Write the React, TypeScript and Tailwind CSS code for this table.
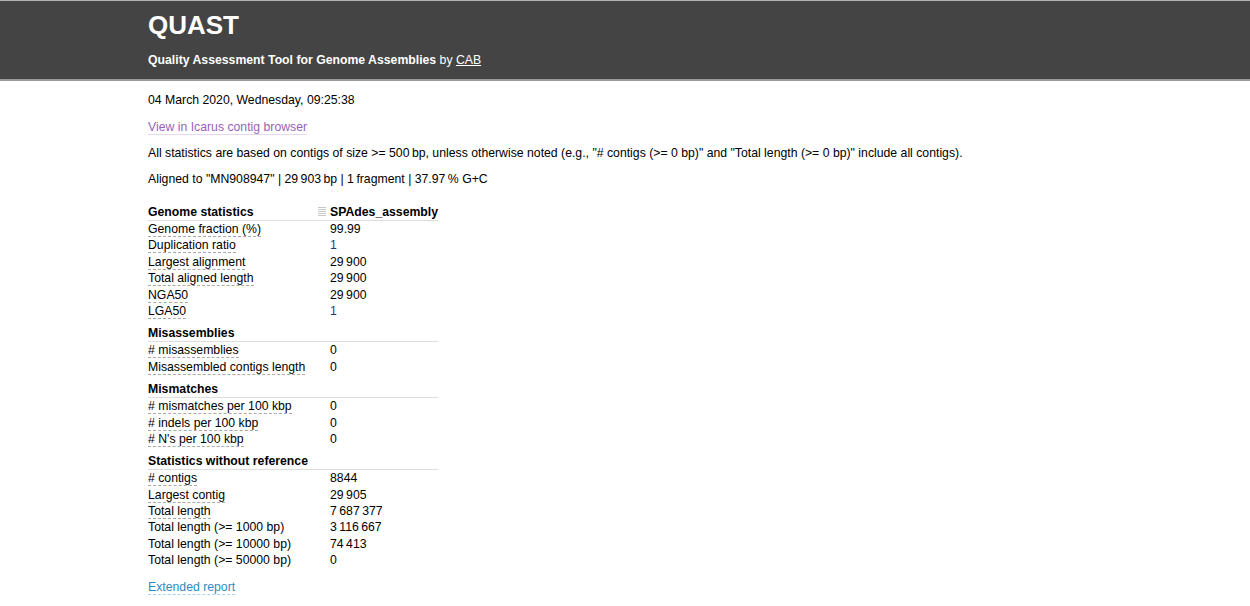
const font = { fontFamily: '"Liberation Sans", Arial, sans-serif' };

type Row = { label: string; value: string; dashed?: boolean; blue?: boolean };
type Section = { title: string; rows: Row[] };

const genome: Row[] = [
  { label: "Genome fraction (%)", value: "99.99", dashed: true },
  { label: "Duplication ratio", value: "1", dashed: true, blue: true },
  { label: "Largest alignment", value: "29\u2009900", dashed: true },
  { label: "Total aligned length", value: "29\u2009900", dashed: true },
  { label: "NGA50", value: "29\u2009900", dashed: true },
  { label: "LGA50", value: "1", dashed: true, blue: true },
];

const sections: Section[] = [
  {
    title: "Misassemblies",
    rows: [
      { label: "# misassemblies", value: "0", dashed: true },
      { label: "Misassembled contigs length", value: "0", dashed: true },
    ],
  },
  {
    title: "Mismatches",
    rows: [
      { label: "# mismatches per 100 kbp", value: "0", dashed: true },
      { label: "# indels per 100 kbp", value: "0", dashed: true },
      { label: "# N's per 100 kbp", value: "0", dashed: true },
    ],
  },
  {
    title: "Statistics without reference",
    rows: [
      { label: "# contigs", value: "8844", dashed: true },
      { label: "Largest contig", value: "29\u2009905", dashed: true },
      { label: "Total length", value: "7\u2009687\u2009377", dashed: true },
      { label: "Total length (>= 1000 bp)", value: "3\u2009116\u2009667" },
      { label: "Total length (>= 10000 bp)", value: "74\u2009413" },
      { label: "Total length (>= 50000 bp)", value: "0" },
    ],
  },
];

function StatRow({ row }: { row: Row }) {
  return (
    <div className="flex h-[16.4px] leading-[16.4px]">
      <div className="w-[182px] shrink-0">
        <span className={row.dashed ? "border-b border-dashed border-[#aaa]" : ""}>{row.label}</span>
      </div>
      <div className={row.blue ? "text-[#1a3a7c]" : ""}>{row.value}</div>
    </div>
  );
}

export default function App() {
  return (
    <div className="min-h-screen bg-white text-[12.25px] text-black" style={font}>
      <header className="h-[81px] border-t border-[#b4b4b4] border-b-2 border-b-[#9a9a9a] bg-[#444444] px-[148px] text-white">
        <h1 className="pt-[9px] text-[26px] font-bold leading-[30px]">QUAST</h1>
        <p className="mt-[12px] leading-[16px]">
          <span className="font-bold">Quality Assessment Tool for Genome Assemblies</span> by{" "}
          <a className="underline">CAB</a>
        </p>
      </header>

      <main className="px-[148px]">
        <p className="mt-[11px] leading-[16px]">04 March 2020, Wednesday, 09:25:38</p>
        <p className="mt-[11px] leading-[16px]">
          <a className="border-b border-[#e8d8f0] text-[#9b5fb8]">View in Icarus contig browser</a>
        </p>
        <p className="mt-[10px] leading-[16px]">
          All statistics are based on contigs of size &gt;= 500{"\u2009"}bp, unless otherwise noted (e.g., "# contigs
          (&gt;= 0 bp)" and "Total length (&gt;= 0 bp)" include all contigs).
        </p>
        <p className="mt-[10px] leading-[16px]">
          Aligned to "MN908947" | 29{"\u2009"}903{"\u2009"}bp | 1{"\u2009"}fragment | 37.97{"\u2009"}% G+C
        </p>

        <div className="mt-[17px] w-[290px]">
          <div className="flex h-[17px] border-b border-[#dddddd] font-bold leading-[16px]">
            <div className="w-[170px] shrink-0">Genome statistics</div>
            <div className="flex w-[12px] shrink-0 items-center">
              <svg width="8" height="9" viewBox="0 0 8 9" className="mb-[1px]">
                <rect x="0" y="0" width="8" height="1" fill="#c8c8c8" />
                <rect x="0" y="2" width="8" height="1" fill="#c8c8c8" />
                <rect x="0" y="4" width="8" height="1" fill="#c8c8c8" />
                <rect x="0" y="6" width="8" height="1" fill="#c8c8c8" />
                <rect x="0" y="8" width="8" height="1" fill="#c8c8c8" />
              </svg>
            </div>
            <div className="whitespace-nowrap">SPAdes_assembly</div>
          </div>
          {genome.map((r) => (
            <StatRow key={r.label} row={r} />
          ))}

          {sections.map((s) => (
            <div key={s.title}>
              <div className="mt-[6px] h-[17px] border-b border-[#dddddd] font-bold leading-[16px]">{s.title}</div>
              {s.rows.map((r) => (
                <StatRow key={r.label} row={r} />
              ))}
            </div>
          ))}
        </div>

        <p className="mt-[10px] leading-[16px]">
          <a className="border-b border-dashed border-[#a9d4ee] text-[#2b8cc4]">Extended report</a>
        </p>
      </main>
    </div>
  );
}
